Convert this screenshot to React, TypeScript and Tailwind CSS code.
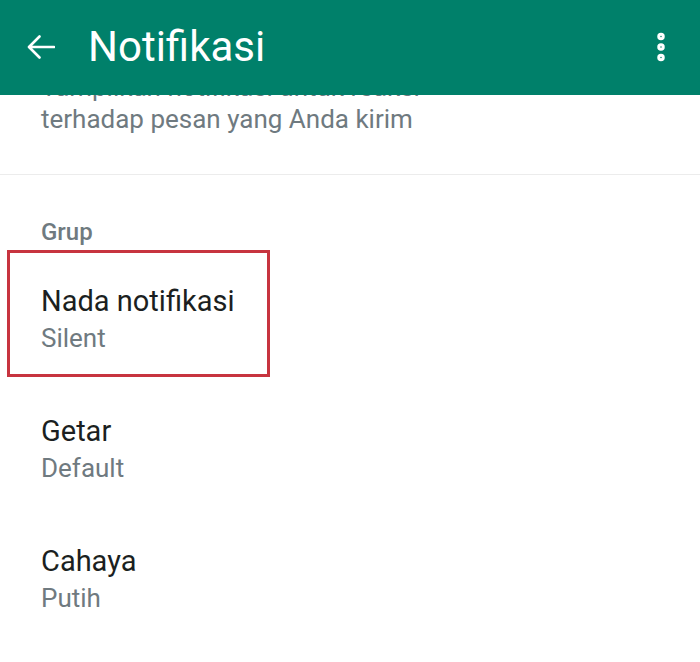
import { EllipsisVertical } from "lucide-react";

const items = [
  { title: "Nada notifikasi", value: "Silent", marked: true },
  { title: "Getar", value: "Default" },
  { title: "Cahaya", value: "Putih" },
];

function BackArrow() {
  return (
    <svg viewBox="0 0 28 24" className="ml-[27px] h-[24px] w-[28px]" fill="none" stroke="currentColor" strokeWidth={2.6} strokeLinecap="round" strokeLinejoin="round">
      <path d="M27 12H2.5M12.5 1.5 2 12l10.5 10.5" />
    </svg>
  );
}

function SettingRow({ title, value, marked = false }: { title: string; value: string; marked?: boolean }) {
  return (
    <div className="relative h-[130px] pl-[41px] pt-[33px]">
      {marked ? <div className="absolute left-[7px] top-[0px] h-[127px] w-[263px] border-[3px] border-[#c7343f]" aria-hidden="true" /> : null}
      <p className="text-[29px] leading-[36px] text-[#1b1f21]">{title}</p>
      <p className="text-[26px] leading-[38px] text-[#6f7a80]">{value}</p>
    </div>
  );
}

export default function App() {
  return (
    <div className="flex h-[662px] w-[700px] flex-col overflow-hidden bg-white font-['Roboto',sans-serif]">
      <header className="flex h-[95px] shrink-0 items-center bg-[#00806a] pb-[2px] text-white">
        <BackArrow />
        <h1 className="ml-[33px] text-[42px] font-normal leading-none">Notifikasi</h1>
        <EllipsisVertical className="ml-auto mr-[21px] h-[36px] w-[36px]" strokeWidth={3} />
      </header>

      {/* list is scrolled: first line of this description sits under the header */}
      <div className="h-[80px] shrink-0 overflow-hidden border-b border-[#ececec]">
        <div className="-mt-[24px] pl-[41px] text-[26px] leading-[32px] text-[#6f7a80]">
          <p>Tampilkan notifikasi untuk reaksi</p>
          <p>terhadap pesan yang Anda kirim</p>
        </div>
      </div>

      <div className="pl-[41px] pt-[42px] text-[24px] font-medium leading-[30px] text-[#6f7a80]">Grup</div>

      <div className="mt-[3px]">
        {items.map((item) => (
          <SettingRow key={item.title} {...item} />
        ))}
      </div>
    </div>
  );
}
